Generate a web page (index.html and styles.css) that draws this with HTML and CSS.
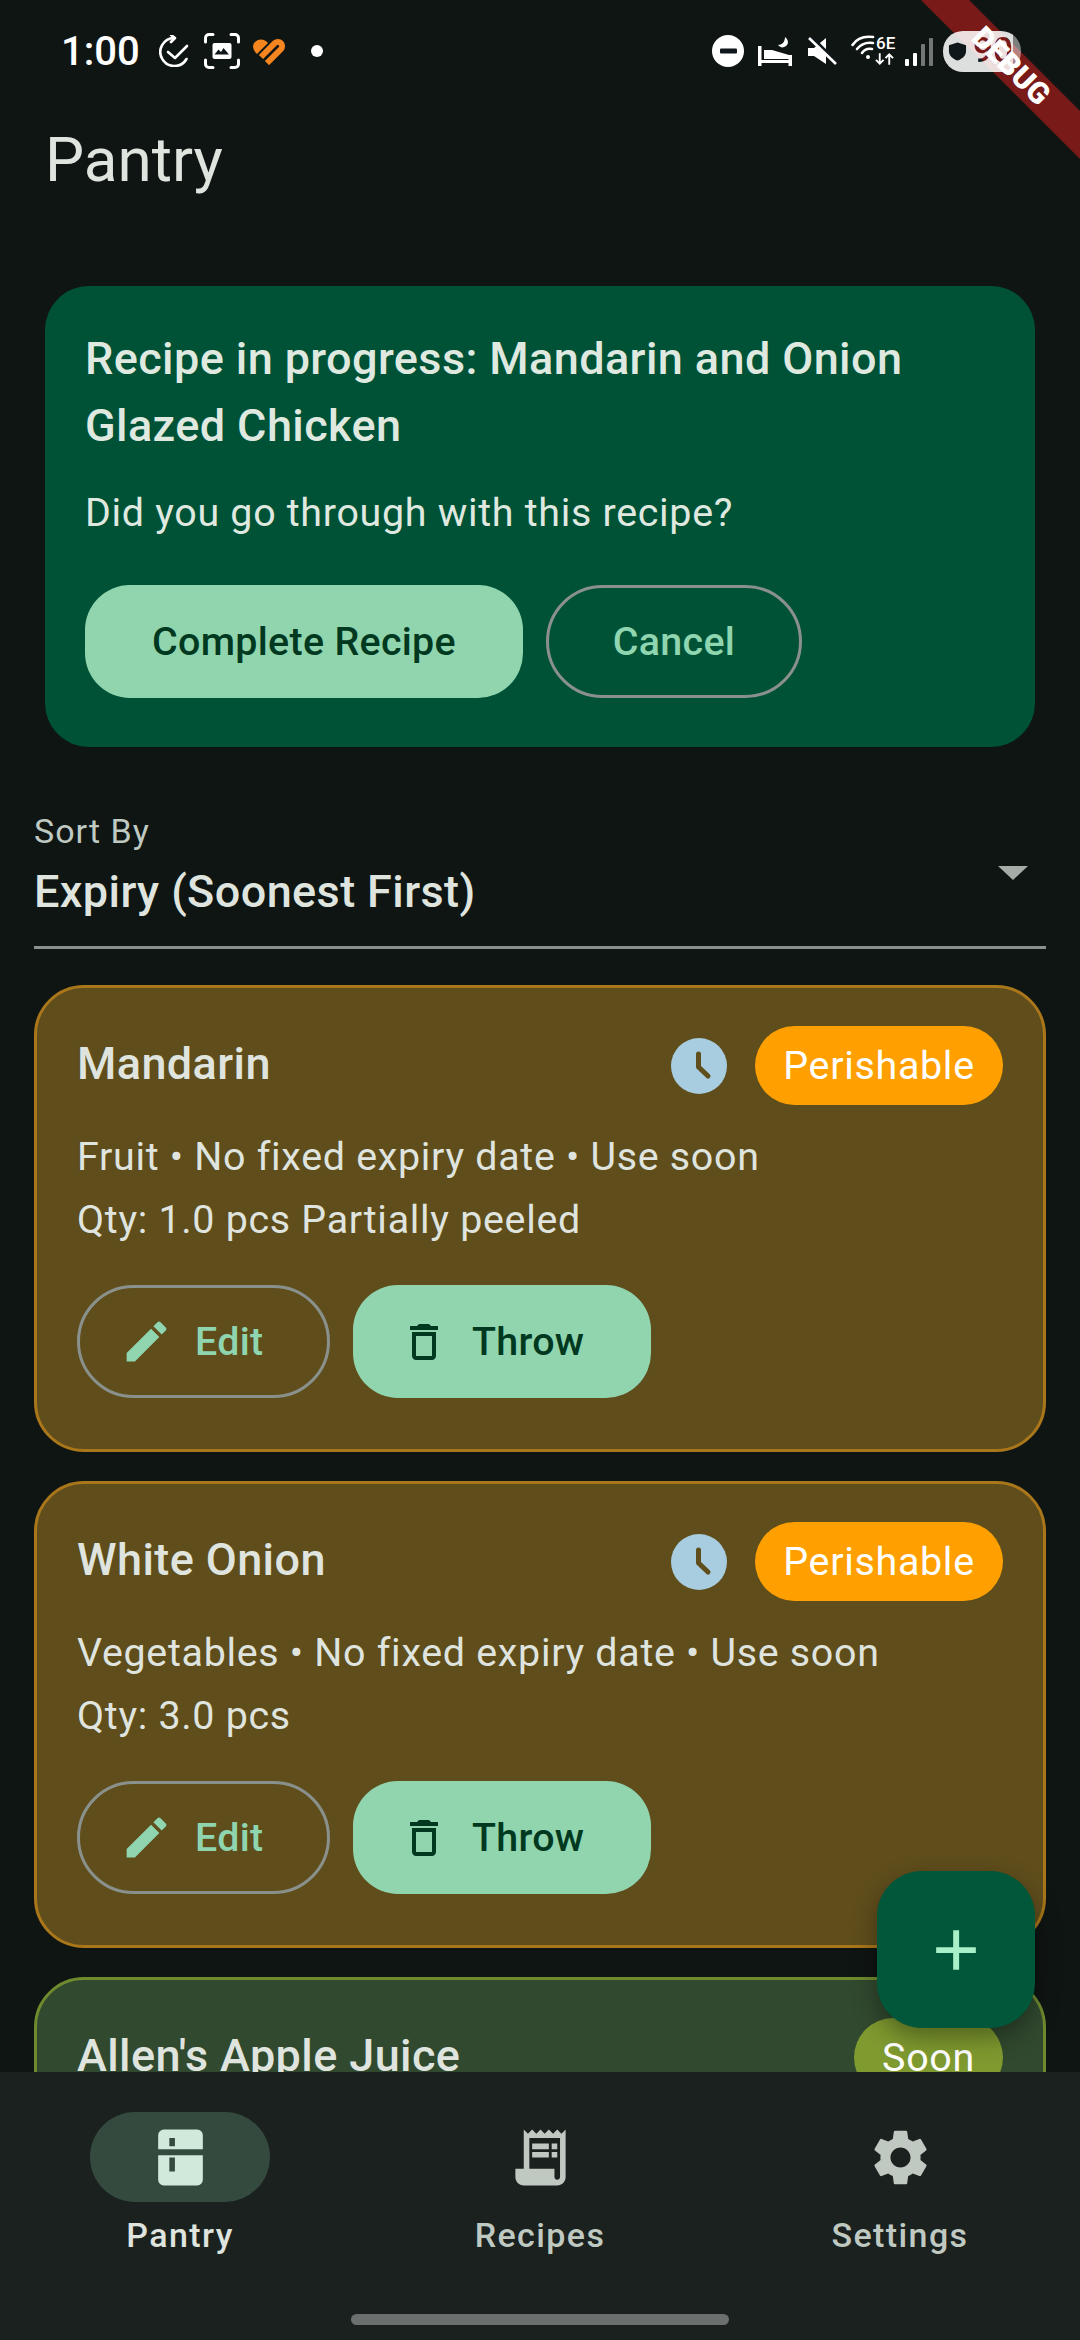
FILE: index.html
```html
<!DOCTYPE html>
<html lang="en">
<head>
    <meta charset="UTF-8">
    <meta name="viewport" content="width=device-width, initial-scale=1.0">
    <title>Pantry</title>
    <link rel="stylesheet" href="styles.css">
</head>
<body>

    <div class="phone">

        <!-- Status bar -->
        <div class="status-bar">
            <div class="status-left">
                <span class="clock">1:00</span>
                <svg class="si-check" viewBox="0 0 30 32" fill="none" stroke="#fff" stroke-width="2.6" stroke-linecap="round" stroke-linejoin="round"><path d="M15 3A14 14 0 1 0 27.500 24"/><path d="M12 0l4 3-4 4"/><path d="M9 17l7 6 12-12"/></svg>
                <svg class="si-shot" viewBox="0 0 36 36" fill="none" stroke="#fff" stroke-width="3" stroke-linecap="round"><path d="M1.500 9V5A3.500 3.500 0 0 1 5 1.500h4M27 1.500h4A3.500 3.500 0 0 1 34.500 5v4M34.500 27v4a3.500 3.500 0 0 1-3.500 3.500h-4M9 34.500H5A3.500 3.500 0 0 1 1.500 31v-4"/><path fill="#fff" stroke="none" d="M8.500 12a2 2 0 0 1 2-2h15a2 2 0 0 1 2 2v12a2 2 0 0 1-2 2h-15a2 2 0 0 1-2-2z"/><path fill="#10171a" stroke="none" d="M10.500 21.500l4-5 2.500 2.500 2.500-4 5.500 6.500z"/></svg>
                <svg class="si-heart" viewBox="0 0 34 28" fill="none" stroke="#f5851f" stroke-width="6"><path d="M15 26L29 12A4.250 4.250 0 0 0 23 6L9 20"/><path fill="#f5851f" stroke="none" d="M16 6C13 2 7 1 3 5 0 8 .5 13 5 17z"/></svg>
                <span class="si-dot"></span>
            </div>
            <div class="status-right">
                <svg class="si-dnd" viewBox="0 0 32 32"><circle cx="16" cy="16" r="16" fill="#fff"/><rect x="8" y="13.500" width="17" height="5" rx="1" fill="#10171a"/></svg>
                <svg class="si-bed" viewBox="0 0 34 29" fill="#fff"><path d="M0 9h3.500v14h27v-5H34v11h-3.500v-3h-27v3H0z"/><path d="M6 13h8l17 5v4H6z"/><path d="M27 0c0 5-3 8-7 8 2 2 4 3 6 2 4-1 6-6 1-10z"/></svg>
                <svg class="si-mute" viewBox="0 0 30 28" fill="#fff"><path d="M1 11h6L19 1v26L7 19H1z"/><path d="M4 0l26 26" stroke="#10171a" stroke-width="4"/><path d="M2 1l27 26" stroke="#fff" stroke-width="2.600"/></svg>
                <div class="si-wifi">
                    <svg viewBox="0 0 26 26" fill="none" stroke="#fff" stroke-width="2.600" stroke-linecap="round"><path d="M1.500 10C6 3 14 1 22 2"/><path d="M6 14c4-5 9-7 16-6"/><path d="M11 18c2-3 5-5 10-4"/><circle cx="17" cy="22" r="2" fill="#fff" stroke="none"/></svg>
                    <div class="si-wifi-side">
                        <span class="si-6e">6E</span>
                        <svg viewBox="0 0 20 14" fill="none" stroke="#fff" stroke-width="2"><path d="M5 1v11M1 8l4 4 4-4M15 13V2M11 6l4-4 4 4"/></svg>
                    </div>
                </div>
                <div class="si-signal">
                    <span class="bar bar-1"></span>
                    <span class="bar bar-2"></span>
                    <span class="bar bar-3 dim"></span>
                    <span class="bar bar-4 dim"></span>
                </div>
                <div class="battery">
                    <svg viewBox="0 0 20 20" fill="#10171a"><path d="M10 .5l9 3v6c0 5-4 8.500-9 10C5 18 1 14.500 1 9.500v-6z"/></svg>
                    <span class="battery-num">90</span>
                </div>
            </div>
        </div>

        <!-- App bar -->
        <div class="app-bar">Pantry</div>

        <!-- Scrolling page content -->
        <div class="content">
            <div class="recipe-card">
                <div class="recipe-title">Recipe in progress: Mandarin and Onion Glazed Chicken</div>
                <div class="recipe-sub">Did you go through with this recipe?</div>
                <div class="btn-row">
                    <button class="btn btn-fill btn-complete">Complete Recipe</button>
                    <button class="btn btn-line btn-cancel">Cancel</button>
                </div>
            </div>

            <div class="sort-field">
                <div class="sort-label">Sort By</div>
                <div class="sort-value">Expiry (Soonest First)</div>
                <span class="sort-arrow"></span>
            </div>

            <div class="item-card perishable">
                <div class="item-head">
                    <div class="item-name">Mandarin</div>
                    <span class="clock-badge">
                        <svg viewBox="0 0 56 56" fill="none" stroke="#5f4d1c" stroke-width="5" stroke-linecap="round" stroke-linejoin="round"><path d="M27.500 16v13l9.500 9"/></svg>
                    </span>
                    <span class="chip chip-orange">Perishable</span>
                </div>
                <div class="item-line">Fruit • No fixed expiry date • Use soon</div>
                <div class="item-line">Qty: 1.0 pcs Partially peeled</div>
                <div class="btn-row">
                    <button class="btn btn-line btn-edit">
                        <svg viewBox="0 0 24 24" fill="#8fd5b0"><path d="M3 17.250V21h3.750L17.810 9.940l-3.750-3.750L3 17.250zM20.710 7.040c.39-.39.39-1.020 0-1.410l-2.340-2.340c-.39-.39-1.020-.39-1.410 0l-1.830 1.830 3.750 3.750 1.830-1.830z"/></svg>
                        Edit
                    </button>
                    <button class="btn btn-fill btn-throw">
                        <svg viewBox="0 0 24 24" fill="#00391f"><path d="M16 9v10H8V9h8m-1.500-6h-5l-1 1H5v2h14V4h-3.500l-1-1zM18 7H6v12c0 1.100.9 2 2 2h8c1.100 0 2-.9 2-2V7z"/></svg>
                        Throw
                    </button>
                </div>
            </div>

            <div class="item-card perishable">
                <div class="item-head">
                    <div class="item-name">White Onion</div>
                    <span class="clock-badge">
                        <svg viewBox="0 0 56 56" fill="none" stroke="#5f4d1c" stroke-width="5" stroke-linecap="round" stroke-linejoin="round"><path d="M27.500 16v13l9.500 9"/></svg>
                    </span>
                    <span class="chip chip-orange">Perishable</span>
                </div>
                <div class="item-line">Vegetables • No fixed expiry date • Use soon</div>
                <div class="item-line">Qty: 3.0 pcs</div>
                <div class="btn-row">
                    <button class="btn btn-line btn-edit">
                        <svg viewBox="0 0 24 24" fill="#8fd5b0"><path d="M3 17.250V21h3.750L17.810 9.940l-3.750-3.750L3 17.250zM20.710 7.040c.39-.39.39-1.020 0-1.410l-2.340-2.340c-.39-.39-1.020-.39-1.410 0l-1.830 1.830 3.750 3.750 1.830-1.830z"/></svg>
                        Edit
                    </button>
                    <button class="btn btn-fill btn-throw">
                        <svg viewBox="0 0 24 24" fill="#00391f"><path d="M16 9v10H8V9h8m-1.500-6h-5l-1 1H5v2h14V4h-3.500l-1-1zM18 7H6v12c0 1.100.9 2 2 2h8c1.100 0 2-.9 2-2V7z"/></svg>
                        Throw
                    </button>
                </div>
            </div>

            <div class="item-card soon">
                <div class="item-head">
                    <div class="item-name">Allen's Apple Juice</div>
                    <span class="chip chip-olive">Soon</span>
                </div>
            </div>
        </div>

        <!-- Bottom navigation -->
        <div class="bottom-nav">
            <div class="nav-items">
                <div class="nav-item active">
                    <span class="nav-pill">
                        <svg viewBox="0 0 24 24" fill="#d0e9da" fill-rule="evenodd"><path d="M6 2h12a2 2 0 0 1 2 2v5H4V4a2 2 0 0 1 2-2zM8 5v3h2V5zM4 11.200h16V20a2 2 0 0 1-2 2H6a2 2 0 0 1-2-2zM8 12v5h2v-5z"/></svg>
                    </span>
                    <span class="nav-label">Pantry</span>
                </div>
                <div class="nav-item">
                    <span class="nav-pill">
                        <svg viewBox="0 0 24 24" fill="#bfc9c2"><path d="M19.500 3.500 18 2l-1.500 1.500L15 2l-1.500 1.500L12 2l-1.500 1.500L9 2 7.500 3.500 6 2v14H3v3c0 1.660 1.340 3 3 3h12c1.660 0 3-1.340 3-3V2l-1.500 1.500zM19 19c0 .55-.45 1-1 1s-1-.45-1-1v-3H8V5h11v14z"/><path d="M9 7h6v2H9zM16 7h2v2h-2zM9 10h6v2H9zM16 10h2v2h-2z"/></svg>
                    </span>
                    <span class="nav-label">Recipes</span>
                </div>
                <div class="nav-item">
                    <span class="nav-pill">
                        <svg viewBox="0 0 24 24" fill="#bfc9c2"><path d="M19.140 12.940c.04-.3.06-.61.06-.94 0-.32-.02-.64-.07-.94l2.030-1.580c.18-.14.23-.41.12-.61l-1.920-3.320c-.12-.22-.37-.29-.59-.22l-2.390.96c-.5-.38-1.030-.7-1.620-.94l-.36-2.540c-.04-.24-.24-.41-.48-.41h-3.840c-.24 0-.43.17-.47.41l-.36 2.540c-.59.24-1.130.57-1.620.94l-2.390-.96c-.22-.08-.47 0-.59.22L2.740 8.870c-.12.21-.08.47.12.61l2.030 1.580c-.05.3-.09.63-.09.94s.02.64.07.94l-2.030 1.580c-.18.14-.23.41-.12.61l1.920 3.320c.12.22.37.29.59.22l2.390-.96c.5.38 1.030.7 1.620.94l.36 2.540c.05.24.24.41.48.41h3.840c.24 0 .44-.17.47-.41l.36-2.540c.59-.24 1.130-.56 1.620-.94l2.390.96c.22.08.47 0 .59-.22l1.920-3.320c.12-.22.07-.47-.12-.61l-2.010-1.580zM12 15.600c-1.980 0-3.600-1.620-3.600-3.600s1.620-3.600 3.600-3.600 3.600 1.620 3.600 3.600-1.620 3.600-3.600 3.600z"/></svg>
                    </span>
                    <span class="nav-label">Settings</span>
                </div>
            </div>
            <div class="home-handle"></div>
        </div>

        <!-- Floating add button -->
        <div class="fab">
            <svg viewBox="0 0 24 24" fill="#a8f0c8"><path d="M11 5h2.100v6H19v2.100h-5.900V19H11v-5.900H5V11h6z"/></svg>
        </div>

        <!-- Debug ribbon: band sits under the status bar, its text over it -->
        <div class="debug-band"></div>
        <div class="debug-text">DEBUG</div>
    </div>

</body>
</html>
```

FILE: styles.css
```css
/* General */
* {
    box-sizing: border-box;
}

body {
    margin: 0;
    background: #0f1513;
    font-family: Roboto, 'Noto Sans', sans-serif;
    color: #dfe4df;
}

.phone {
    position: relative;
    width: 1080px;
    height: 2340px;
    display: flex;
    flex-direction: column;
    overflow: hidden;
    background: #0f1513;
}

/* Status bar */
.status-bar {
    position: relative;
    z-index: 2;
    height: 102px;
    flex: none;
    display: flex;
    justify-content: space-between;
    align-items: center;
    padding: 0 59px 0 61px;
}

.status-left,
.status-right {
    display: flex;
    align-items: center;
}

.clock {
    font-size: 40px;
    font-weight: 500;
    color: #fff;
    width: 98px;
}

.si-check {
    width: 30px;
    height: 32px;
    margin-right: 15px;
}

.si-shot {
    width: 36px;
    height: 36px;
    margin-right: 12px;
}

.si-heart {
    width: 34px;
    height: 28px;
    margin-right: 25px;
}

.si-dot {
    width: 12px;
    height: 12px;
    border-radius: 50%;
    background: #fff;
}

.si-dnd {
    width: 32px;
    height: 32px;
    margin-right: 14px;
}

.si-bed {
    width: 34px;
    height: 29px;
    margin-right: 15px;
}

.si-mute {
    width: 30px;
    height: 28px;
    margin-right: 14px;
}

.si-wifi {
    display: flex;
    width: 44px;
    height: 32px;
    margin-right: 10px;
}

.si-wifi > svg {
    width: 26px;
    height: 26px;
    flex: none;
}

.si-wifi-side {
    display: flex;
    flex-direction: column;
    margin-left: -1px;
    width: 19px;
}

.si-wifi-side svg {
    width: 19px;
    height: 14px;
    margin-left: -1px;
}

.si-6e {
    font-size: 17px;
    line-height: 17px;
    font-weight: 500;
    color: #fff;
}

.si-signal {
    display: flex;
    align-items: flex-end;
    gap: 4px;
    height: 30px;
    margin-right: 10px;
}

.bar {
    width: 4px;
    background: #fff;
    border-radius: 1px;
}

.bar-1 { height: 7px; }
.bar-2 { height: 13px; }
.bar-3 { height: 22px; }
.bar-4 { height: 28px; }

.bar.dim {
    background: rgba(255, 255, 255, 0.42);
}

.battery {
    width: 78px;
    height: 41px;
    border-radius: 20px;
    background: linear-gradient(to right, rgba(255, 255, 255, 0.86) 90%, rgba(255, 255, 255, 0.45) 90%);
    display: flex;
    align-items: center;
    padding-left: 5px;
    gap: 6px;
}

.battery svg {
    width: 19px;
    height: 19px;
    flex: none;
}

.battery-num {
    width: 42px;
    height: 36px;
    font-size: 35px;
    font-weight: 500;
    line-height: 36px;
    color: transparent;
    background: linear-gradient(45deg, #10171a 24%, #7a1a18 24%, #7a1a18 83%, #10171a 83%);
    -webkit-background-clip: text;
    background-clip: text;
}

/* App bar */
.app-bar {
    height: 120px;
    flex: none;
    padding: 0 0 0 45px;
    font-size: 62px;
    line-height: 116px;
    color: #dfe4df;
}

/* Content */
.content {
    flex: 1;
    min-height: 0;
    overflow: hidden;
    padding: 64px 34px 0;
}

.recipe-card {
    margin: 0 11px;
    height: 461px;
    background: #005236;
    border-radius: 44px;
    padding: 39px 40px 0;
}

.recipe-title {
    font-size: 45px;
    font-weight: 500;
    line-height: 67px;
    letter-spacing: 0.4px;
    color: #dfe9e0;
}

.recipe-sub {
    margin-top: 26px;
    font-size: 39.4px;
    line-height: 56px;
    letter-spacing: 0.7px;
    color: #dfe9e0;
}

/* Buttons */
.btn-row {
    display: flex;
    gap: 23px;
}

.recipe-card .btn-row {
    margin-top: 44px;
}

.btn {
    height: 113px;
    border-radius: 45px;
    font-family: inherit;
    font-size: 39.4px;
    font-weight: 500;
    letter-spacing: 0.3px;
    display: flex;
    align-items: center;
    justify-content: center;
    padding: 0;
}

.btn-fill {
    background: #91d5ae;
    color: #00391f;
    border: none;
}

.btn-line {
    background: transparent;
    color: #8fd5b0;
    border: 3px solid #8a918c;
    border-radius: 57px;
}

.btn-complete {
    width: 438px;
}

.btn-cancel {
    width: 256px;
}

.btn-edit {
    width: 253px;
    justify-content: flex-start;
    padding-left: 40px;
    gap: 22px;
}

.btn-edit svg {
    width: 53px;
    height: 53px;
    flex: none;
}

.btn-throw {
    width: 298px;
    justify-content: flex-start;
    padding-left: 47px;
    gap: 24px;
}

.btn-throw svg {
    width: 48px;
    height: 48px;
    flex: none;
}

/* Sort dropdown */
.sort-field {
    position: relative;
    margin-top: 62px;
    height: 140px;
    border-bottom: 3px solid #8a918c;
}

.sort-label {
    font-size: 34px;
    line-height: 44px;
    letter-spacing: 1px;
    color: #bfc9c2;
}

.sort-value {
    margin-top: 11px;
    font-size: 45px;
    font-weight: 500;
    line-height: 56px;
    letter-spacing: 0.4px;
    color: #dfe4df;
}

.sort-arrow {
    position: absolute;
    right: 18px;
    top: 57px;
    border-left: 15px solid transparent;
    border-right: 15px solid transparent;
    border-top: 14px solid #a5aca7;
}

/* Item cards */
.item-card {
    height: 467px;
    margin-top: 29px;
    border: 3px solid;
    border-radius: 50px;
    padding: 38px 40px 0;
}

.sort-field + .item-card {
    margin-top: 36px;
}

.perishable {
    background: #5f4d1c;
    border-color: #a9761a;
}

.soon {
    background: #31492f;
    border-color: #6f8b2e;
}

.item-head {
    display: flex;
    align-items: center;
    height: 79px;
    margin-bottom: 20px;
}

.item-name {
    flex: 1;
    padding-bottom: 4px;
    font-size: 45px;
    font-weight: 500;
    letter-spacing: 0.4px;
    color: #dfe4df;
}

.clock-badge {
    width: 56px;
    height: 56px;
    border-radius: 50%;
    background: #a8cde0;
    margin-right: 28px;
}

.clock-badge svg {
    display: block;
    width: 56px;
    height: 56px;
}

.chip {
    height: 79px;
    border-radius: 40px;
    display: flex;
    align-items: center;
    justify-content: center;
    font-size: 39.4px;
    letter-spacing: 0.7px;
    color: #fff;
}

.chip-orange {
    width: 248px;
    background: #ffa000;
}

.chip-olive {
    width: 149px;
    background: #7f9a2f;
}

.item-line {
    font-size: 39.4px;
    line-height: 63px;
    letter-spacing: 0.7px;
    color: #dfe4df;
}

.item-card .btn-row {
    margin-top: 34px;
}

/* Bottom navigation */
.bottom-nav {
    height: 268px;
    flex: none;
    background: #1b211e;
    position: relative;
}

.nav-items {
    display: grid;
    grid-template-columns: repeat(3, 1fr);
    padding-top: 40px;
}

.nav-item {
    display: flex;
    flex-direction: column;
    align-items: center;
}

.nav-pill {
    width: 180px;
    height: 90px;
    border-radius: 45px;
    display: flex;
    align-items: center;
    justify-content: center;
}

.nav-item.active .nav-pill {
    background: #354a3f;
}

.nav-pill svg {
    width: 67px;
    height: 67px;
}

.nav-label {
    margin-top: 11px;
    font-size: 34px;
    font-weight: 500;
    line-height: 44px;
    letter-spacing: 1.4px;
    color: #bfc9c2;
}

.nav-item.active .nav-label {
    color: #dfe4df;
}

.home-handle {
    position: absolute;
    left: 351px;
    bottom: 15px;
    width: 378px;
    height: 11px;
    border-radius: 6px;
    background: #6b706e;
}

/* FAB */
.fab {
    position: absolute;
    left: 877px;
    top: 1871px;
    width: 158px;
    height: 157px;
    border-radius: 45px;
    background: #00573a;
    box-shadow: 0 10px 24px rgba(0, 0, 0, 0.35);
    display: flex;
    align-items: center;
    justify-content: center;
}

.fab svg {
    width: 68px;
    height: 68px;
}

/* Debug ribbon */
.debug-band,
.debug-text {
    position: absolute;
    left: 861px;
    top: 49px;
    width: 300px;
    height: 34px;
    transform: rotate(45deg);
}

.debug-band {
    z-index: 1;
    background: #7a1a18;
}

.debug-text {
    z-index: 3;
    color: #fff;
    font-size: 30px;
    font-weight: 900;
    line-height: 34px;
    text-align: center;
}
```
